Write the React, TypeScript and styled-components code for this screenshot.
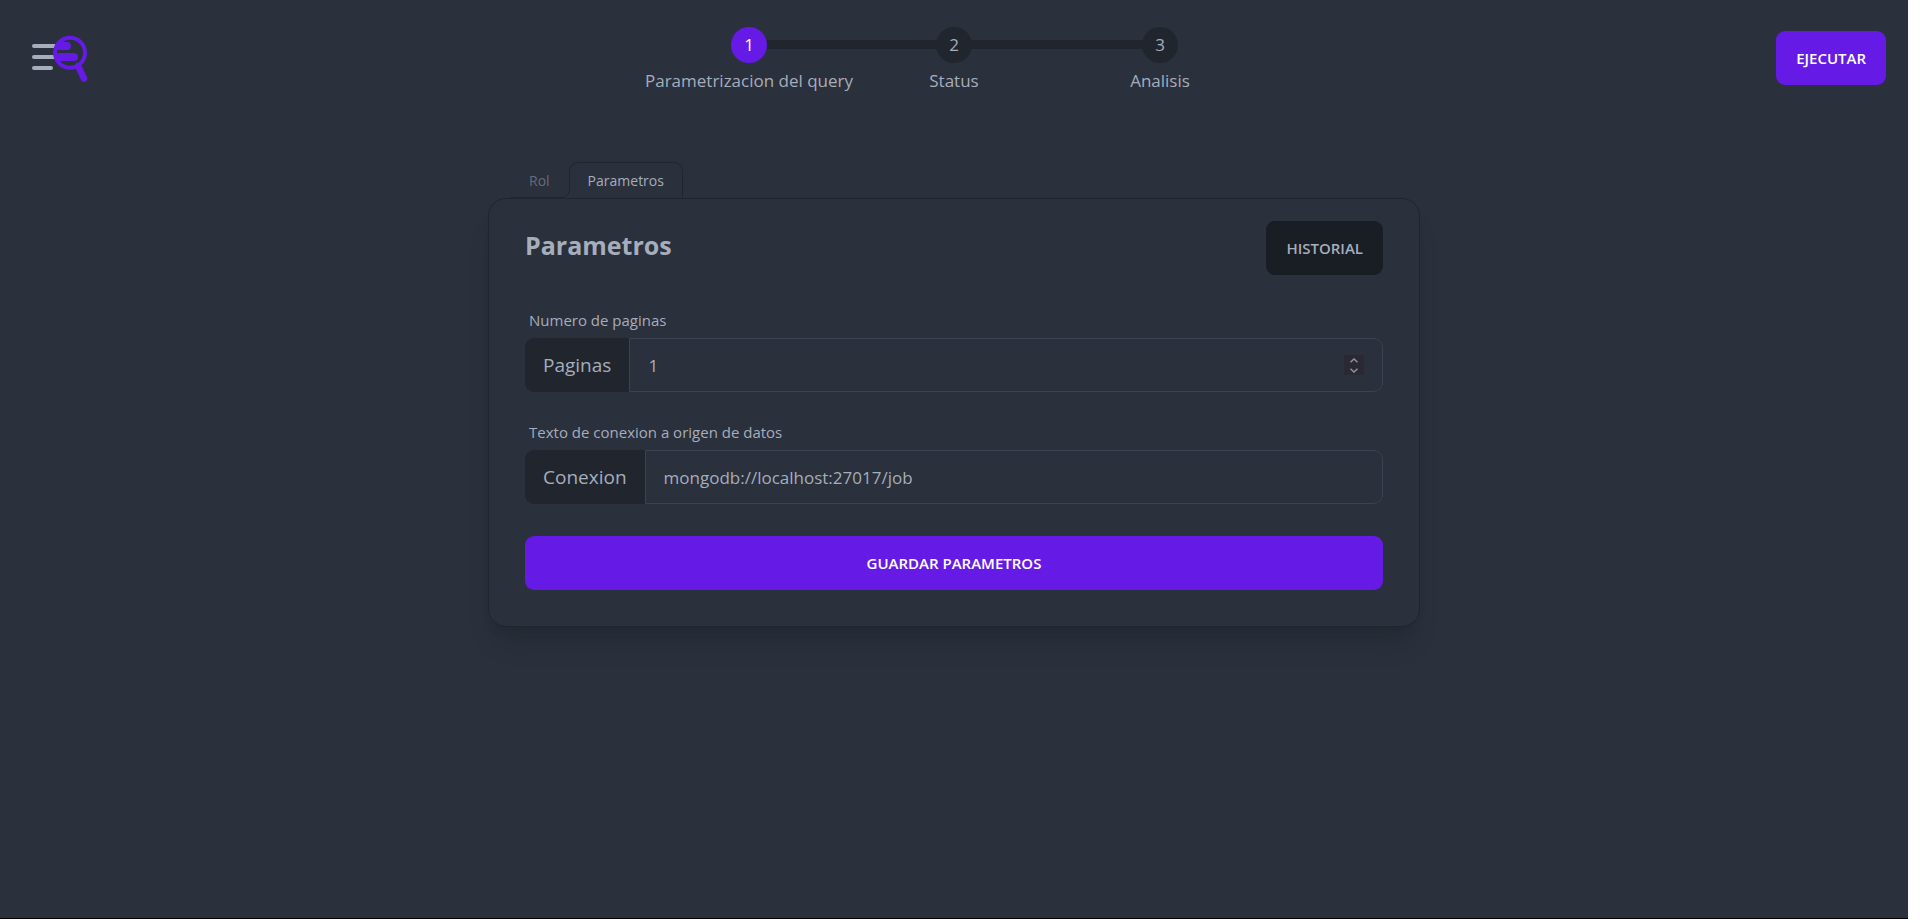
import React, { useState } from "react";
import styled, { createGlobalStyle, css } from "styled-components";

const color = {
  base: "#2a303c",
  line: "#20252e",
  neutral: "#21252e",
  dark: "#191d24",
  text: "#a6adbb",
  muted: "#656c7a",
  primary: "#661ae6",
  inputLine: "#3c4350",
};

const GlobalStyle = createGlobalStyle`
  *, *::before, *::after { box-sizing: border-box; }
  body {
    margin: 0;
    background: #fff;
    color: ${color.text};
    font-family: "Segoe UI", "Open Sans", "Noto Sans", sans-serif;
    font-size: 17px;
    line-height: 27px;
  }
  button, input { font: inherit; color: inherit; }
`;

const Page = styled.div`
  display: flex;
  flex-direction: column;
  min-height: calc(100vh - 4px);
  margin-right: 12px;
  background: ${color.base};
  border-bottom: 1px solid #000;
`;

const Header = styled.header`
  display: grid;
  grid-template-columns: 1fr auto 1fr;
  align-items: center;
  padding: 22px 22px 18px;
`;

const LogoLink = styled.a`
  justify-self: start;
  display: flex;
  padding-left: 10px;
`;

const Steps = styled.ol`
  display: grid;
  grid-auto-flow: column;
  grid-auto-columns: 206px;
  margin: 0;
  padding: 0;
  list-style: none;
`;

const Step = styled.li`
  position: relative;
  display: grid;
  grid-template-rows: 45px 27px;
  justify-items: center;
  align-items: center;
  white-space: nowrap;

  &:not(:first-child)::before {
    content: "";
    position: absolute;
    top: 18px;
    right: 50%;
    width: 100%;
    height: 9px;
    background: ${color.neutral};
  }
`;

const StepDot = styled.span<{ $active?: boolean }>`
  position: relative;
  z-index: 1;
  display: grid;
  place-items: center;
  width: 36px;
  height: 36px;
  border-radius: 50%;
  background: ${(p) => (p.$active ? color.primary : color.neutral)};
  color: ${(p) => (p.$active ? "#fff" : color.text)};
`;

const Button = styled.button<{ $tone?: "dark"; $wide?: boolean }>`
  height: 54px;
  padding: 0 20px;
  border: 0;
  border-radius: 9px;
  background: ${(p) => (p.$tone === "dark" ? color.dark : color.primary)};
  color: ${(p) => (p.$tone === "dark" ? color.text : "#fff")};
  font-size: 15px;
  font-weight: 600;
  text-transform: uppercase;
  cursor: pointer;
  ${(p) => p.$wide && css`width: 100%;`}
`;

const RunButton = styled(Button)`
  justify-self: end;
`;

const Main = styled.main`
  width: 100%;
  max-width: 932px;
  margin: 50px auto 0;
`;

const Tabs = styled.div`
  display: flex;
  height: 36px;
  padding-left: 22px;
`;

const Tab = styled.button<{ $active?: boolean }>`
  position: relative;
  padding: 0 18px;
  border: 1px solid transparent;
  border-bottom-color: ${color.line};
  background: none;
  color: ${color.muted};
  font-size: 14px;
  cursor: pointer;

  ${(p) =>
    p.$active &&
    css`
      border-color: ${color.line};
      border-bottom-color: transparent;
      border-radius: 9px 9px 0 0;
      color: ${color.text};

      &::before {
        content: "";
        position: absolute;
        left: -9px;
        bottom: -1px;
        width: 9px;
        height: 9px;
        background: radial-gradient(
          circle at 0 0,
          ${color.base} 8px,
          ${color.line} 8px,
          ${color.line} 9px,
          ${color.base} 9px
        );
      }
    `}
`;

const Card = styled.section`
  padding: 22px 36px 36px;
  border: 1px solid ${color.line};
  border-radius: 18px;
  background: ${color.base};
  box-shadow: 0 22px 28px -6px rgba(0, 0, 0, 0.1), 0 9px 11px -6px rgba(0, 0, 0, 0.1);
`;

const CardHead = styled.div`
  display: flex;
  justify-content: space-between;
  align-items: flex-start;
  margin-bottom: 27px;
`;

const Title = styled.h1`
  margin: 6px 0 0;
  font-size: 25px;
  line-height: 36px;
  font-weight: 700;
`;

const Fields = styled.div`
  display: grid;
  gap: 22px;
  margin-bottom: 32px;
`;

const Caption = styled.label`
  display: block;
  padding: 4px;
  font-size: 15px;
  line-height: 28px;
`;

const Group = styled.div`
  display: flex;
  height: 54px;
  border-radius: 9px;
  overflow: hidden;
`;

const Addon = styled.span`
  display: flex;
  align-items: center;
  padding: 0 18px;
  background: ${color.neutral};
  font-size: 19px;
`;

const InputBox = styled.div`
  flex: 1;
  display: flex;
  align-items: center;
  padding: 0 18px;
  border: 1px solid ${color.inputLine};
  border-radius: 0 9px 9px 0;
`;

const Input = styled.input`
  flex: 1;
  min-width: 0;
  padding: 0;
  border: 0;
  outline: 0;
  background: none;
  appearance: textfield;

  &::-webkit-inner-spin-button {
    display: none;
  }
`;

const Spinner = styled.div`
  display: flex;
  flex-direction: column;
  width: 20px;
  height: 20px;
  background: #2a2830;
`;

const SpinButton = styled.button`
  display: grid;
  place-items: center;
  flex: 1;
  padding: 0;
  border: 0;
  background: none;
  cursor: pointer;
`;

function Logo() {
  return (
    <svg width="56" height="48" viewBox="0 0 56 48" fill="none" strokeLinecap="round" aria-label="Inicio">
      <g stroke="#a6adbb" strokeWidth="4">
        <path d="M2 12h24M2 23h24M2 34h17" />
      </g>
      <g stroke="#661ae6">
        <path d="M27 12h8M27 23h15" strokeWidth="8" />
        <circle cx="38" cy="18.7" r="15" strokeWidth="4" />
        <path d="M46 32l6 12.5" strokeWidth="6.5" />
      </g>
    </svg>
  );
}

function Chevron({ up }: { up?: boolean }) {
  return (
    <svg width="8" height="5" viewBox="0 0 8 5" fill="none" stroke="#8f93a0" strokeWidth="1.5">
      <path d={up ? "M0.5 4.2L4 1l3.5 3.2" : "M0.5 0.8L4 4l3.5-3.2"} />
    </svg>
  );
}

const steps = ["Parametrizacion del query", "Status", "Analisis"];

export default function App() {
  const [pages, setPages] = useState(1);
  const [connection, setConnection] = useState("mongodb://localhost:27017/job");

  return (
    <>
      <GlobalStyle />
      <Page>
        <Header>
          <LogoLink href="#">
            <Logo />
          </LogoLink>
          <Steps>
            {steps.map((label, i) => (
              <Step key={label}>
                <StepDot $active={i === 0}>{i + 1}</StepDot>
                <span>{label}</span>
              </Step>
            ))}
          </Steps>
          <RunButton type="button">Ejecutar</RunButton>
        </Header>
        <Main>
          <Tabs role="tablist">
            <Tab role="tab" type="button" aria-selected={false}>Rol</Tab>
            <Tab role="tab" type="button" aria-selected $active>Parametros</Tab>
          </Tabs>
          <Card>
            <CardHead>
              <Title>Parametros</Title>
              <Button type="button" $tone="dark">Historial</Button>
            </CardHead>
            <Fields>
              <div>
                <Caption htmlFor="pages">Numero de paginas</Caption>
                <Group>
                  <Addon>Paginas</Addon>
                  <InputBox>
                    <Input
                      id="pages"
                      type="number"
                      value={pages}
                      onChange={(e) => setPages(Number(e.target.value))}
                    />
                    <Spinner>
                      <SpinButton type="button" aria-label="Aumentar" onClick={() => setPages(pages + 1)}>
                        <Chevron up />
                      </SpinButton>
                      <SpinButton type="button" aria-label="Disminuir" onClick={() => setPages(pages - 1)}>
                        <Chevron />
                      </SpinButton>
                    </Spinner>
                  </InputBox>
                </Group>
              </div>
              <div>
                <Caption htmlFor="connection">Texto de conexion a origen de datos</Caption>
                <Group>
                  <Addon>Conexion</Addon>
                  <InputBox>
                    <Input
                      id="connection"
                      type="text"
                      value={connection}
                      onChange={(e) => setConnection(e.target.value)}
                    />
                  </InputBox>
                </Group>
              </div>
            </Fields>
            <Button type="button" $wide>Guardar parametros</Button>
          </Card>
        </Main>
      </Page>
    </>
  );
}
